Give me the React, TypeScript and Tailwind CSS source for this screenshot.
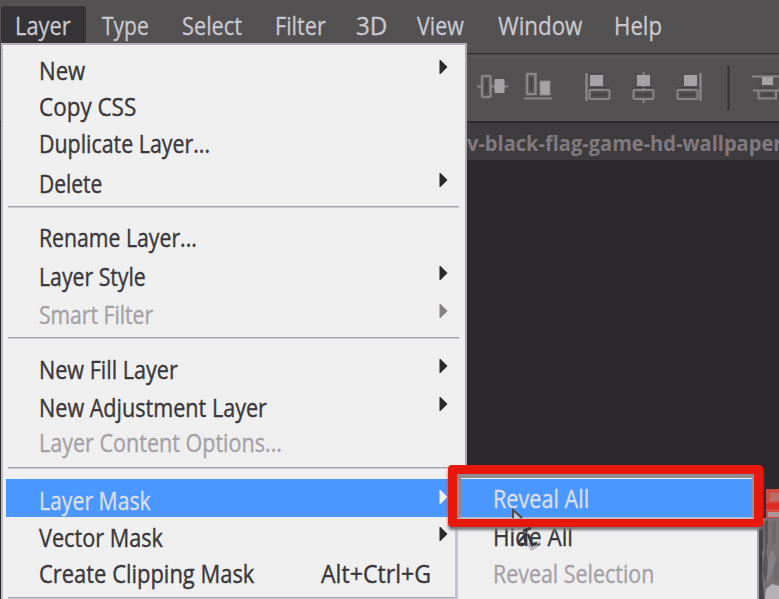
import { useLayoutEffect, useRef, useState } from 'react';

type FitProps = { text: string; width: number; className?: string };

// Condenses a label horizontally so that it fills the given width.
function Fit({ text, width, className = '' }: FitProps) {
  const ref = useRef<HTMLSpanElement>(null);
  const [scale, setScale] = useState(0.87);
  useLayoutEffect(() => {
    if (ref.current) setScale(width / ref.current.offsetWidth);
  }, [text, width]);
  return (
    <span className="block shrink-0" style={{ width }}>
      <span
        ref={ref}
        className={`inline-block origin-left whitespace-pre ${className}`}
        style={{ transform: `scaleX(${scale})` }}
      >
        {text}
      </span>
    </span>
  );
}

function Arrow({ className }: { className: string }) {
  return (
    <svg viewBox="0 0 9 14" className={`h-[14px] w-[9px] shrink-0 ${className}`} fill="currentColor">
      <path d="M0.5 0H1.5L8.5 7L1.5 14H0.5Z" />
    </svg>
  );
}

type RowProps = {
  text: string;
  width: number;
  height: string;
  arrow?: boolean;
  low?: boolean;
  tone?: 'normal' | 'muted' | 'active';
  shortcut?: string;
};

function Row({ text, width, height, arrow, low, tone = 'normal', shortcut }: RowProps) {
  const color = tone === 'muted' ? 'text-[#a5a1a7]' : tone === 'active' ? 'text-[#dcdfe8]' : 'text-[#3a383c]';
  const arrowColor = tone === 'muted' ? 'text-[#858084]' : tone === 'active' ? 'text-[#efefef]' : 'text-[#2b292c]';
  const padding = tone === 'active' ? 'bg-[#4a97ff] pt-[4px]' : low ? 'pt-[2px]' : 'pt-px';
  return (
    <div className={`flex items-center justify-between pr-[14px] pl-[32.5px] ${height} ${color} ${padding}`}>
      <Fit text={text} width={width} />
      {arrow && <Arrow className={`-mt-[7px] ${arrowColor}`} />}
      {shortcut && (
        <div className="pr-[17px]">
          <Fit text={shortcut} width={110} />
        </div>
      )}
    </div>
  );
}

function Separator({ className }: { className: string }) {
  return (
    <div className={`flex items-center pr-[3px] pl-[2px] ${className}`}>
      <div className="h-[2px] w-full border-b border-[#cbccd4] bg-[#a3a2ab]" />
    </div>
  );
}

function MenuBar() {
  return (
    <header className="flex h-[53px] bg-[#535152] pt-[6px] pl-px text-[25px] leading-[39px] text-[#c9c8cf] [-webkit-text-stroke:0.3px]">
      <div className="h-[37px] w-[85px] rounded-t-[3px] bg-[#363436] pl-[14px]">
        <Fit text="Layer" width={56} />
      </div>
      <nav className="flex">
        <div className="w-[96px] pl-[16px]"><Fit text="Type" width={47} /></div>
        <div className="w-[93px]"><Fit text="Select" width={60} /></div>
        <div className="w-[81px]"><Fit text="Filter" width={51} /></div>
        <div className="w-[61px]"><Fit text="3D" width={31} /></div>
        <div className="w-[81px]"><Fit text="View" width={47} /></div>
        <div className="w-[116px]"><Fit text="Window" width={84} /></div>
        <div><Fit text="Help" width={48} /></div>
      </nav>
    </header>
  );
}

function Toolbar() {
  return (
    <div className="h-[70px] border-t border-b-2 border-[#2b292c] bg-[#535152] pl-[470px]">
      <svg viewBox="470 54 309 67" className="h-[67px] w-[309px]" fill="none" stroke="#8b8487" strokeWidth="2">
        <path d="M470 57H779" stroke="#666365" strokeWidth="1" />
        {/* align vertical centers */}
        <path d="M477 86.5H481M491 86.5H508" />
        <rect x="482" y="76" width="8.5" height="21" rx="1" strokeWidth="2.5" />
        <rect x="494.5" y="79" width="10" height="14" rx="1" fill="#a5a1a4" stroke="none" />
        {/* align bottom edges */}
        <rect x="527" y="74" width="8.5" height="20" strokeWidth="2.5" />
        <rect x="540" y="81" width="10" height="14" fill="#a5a1a4" stroke="#8b8487" strokeWidth="1" />
        <path d="M524 98.5H552" />
        {/* align left edges */}
        <path d="M586.5 73V101" strokeWidth="2.5" />
        <rect x="590" y="75" width="13" height="11" fill="#a5a1a4" stroke="none" />
        <rect x="589.5" y="90" width="20" height="9" rx="1" />
        {/* align horizontal centers */}
        <path d="M643.5 72V76M643.5 85V89M643.5 99V103" />
        <rect x="637" y="75" width="13" height="11" fill="#a5a1a4" stroke="none" />
        <rect x="633.5" y="90" width="20" height="9" rx="1" />
        {/* align right edges */}
        <path d="M700.5 73V101" strokeWidth="2.5" />
        <rect x="684" y="75" width="13" height="11" fill="#a5a1a4" stroke="none" />
        <rect x="677.5" y="90" width="20" height="9" rx="1" />
        <path d="M728.5 66V110" stroke="#353336" />
        {/* distribute top edges */}
        <path d="M752 76.5H779M753 90.5H779" />
        <rect x="762" y="77" width="11" height="8" fill="#a5a1a4" stroke="none" />
        <path d="M758.5 91V98.5H776V91" />
        <path
          d="M590 73.5H603M633 73.5H638M761 73.5H779M590 87.5H609M634 87.5H653M677 87.5H697M758 88H776"
          stroke="#434143"
          strokeWidth="1"
        />
        <path d="M592 94.5H607M636 94.5H651M680 94.5H695M762 94.5H773M486.2 80V93M531.2 78V90" stroke="#454345" strokeWidth="2" />
      </svg>
    </div>
  );
}

// Sliver of the open photo at the right edge of the canvas.
function PhotoEdge() {
  return (
    <svg viewBox="0 0 21 110" className="h-[110px] w-[21px]">
      <rect x="4" y="29" width="17" height="81" fill="#777174" />
      <path d="M0 29H5V60L3 70L6 110H0Z" fill="#464346" />
      <path d="M6 34L10 30V52L8 63L11 78L7 92L4 80L7 62Z" fill="#5b575a" />
      <path d="M14 36L18 30V50L15 58Z" fill="#6a6669" />
      <path d="M10 68L15 60L18 70L14 85L9 93Z" fill="#868184" />
      <path d="M16 78L21 70V91H16Z" fill="#6e6a6d" />
      <path d="M8 100L14 95L21 97V110H7Z" fill="#b5b1b7" />
      <rect x="8" y="0" width="13" height="29" fill="#d14a43" />
      <path d="M12 4H21V12H12Z" fill="#b9706d" />
      <path d="M8 14H21V20H8Z" fill="#dd2b22" />
      <path d="M10 23H21V28H10Z" fill="#ae9295" />
    </svg>
  );
}

function LayerMenu() {
  return (
    <div className="absolute top-[43px] left-px h-[556px] w-[466px] overflow-hidden border-t-2 border-r-2 border-l-2 border-t-[#b6b1b8] border-r-[#aaa8af] border-l-[#bdbcc6] bg-[#efefef] pt-[6px] pr-[3px] pl-[3px] text-[25px] leading-none [-webkit-text-stroke:0.4px]">
      <Row text="New" width={46} height="h-[36px]" arrow low />
      <Row text="Copy CSS" width={97} height="h-[37px]" />
      <Row text="Duplicate Layer..." width={171} height="h-[38px]" />
      <Row text="Delete" width={63} height="h-[40px]" arrow low />
      <Separator className="mb-[5px] h-[9px]" />
      <Row text="Rename Layer..." width={158} height="h-[40px]" low />
      <Row text="Layer Style" width={107} height="h-[38px]" arrow low />
      <Row text="Smart Filter" width={114} height="h-[38px]" tone="muted" arrow low />
      <Separator className="mb-[6px] h-[11px]" />
      <Row text="New Fill Layer" width={139} height="h-[38px]" arrow low />
      <Row text="New Adjustment Layer" width={228} height="h-[38px]" arrow low />
      <Row text="Layer Content Options..." width={243} height="h-[34px]" tone="muted" />
      <Separator className="mb-[2px] h-[18px]" />
      <Row text="Layer Mask" width={112} height="h-[38px]" tone="active" arrow />
      <Row text="Vector Mask" width={124} height="h-[39px]" arrow low />
      <Row text="Create Clipping Mask" width={215} height="h-[34px]" shortcut="Alt+Ctrl+G" />
      <Separator className="h-[16px]" />
    </div>
  );
}

function MaskSubmenu() {
  return (
    <div className="absolute top-[474px] left-[455px] h-[125px] w-[304px] border-r-2 border-l-3 border-r-[#a5a2a9] border-l-[#c4c4ce] bg-[#efefef] pt-[5px] text-[25px] leading-none [-webkit-text-stroke:0.4px]">
      <div className="flex h-[38px] items-center bg-[#4a97ff] pl-[35px] text-[#dcdfe8]">
        <Fit text="Reveal All" width={96} />
      </div>
      <div className="flex h-[38px] items-center pl-[35px] text-[#3a383c]">
        <Fit text="Hide All" width={80} />
      </div>
      <div className="flex h-[36px] items-center pl-[35px] text-[#a5a1a7]">
        <Fit text="Reveal Selection" width={161} />
      </div>
    </div>
  );
}

// Red frame around the "Reveal All" entry.
function Highlight() {
  return (
    <div className="absolute top-[465px] left-[448px] h-[62px] w-[315px] rounded-[4px] border-[9px] border-b-[8px] border-[#e8190c] shadow-[0_3px_3px_#77737a]">
      <div className="h-full w-full border-t-4 border-r-2 border-b-2 border-l-4 border-t-[#8f8b91] border-r-[#96949e] border-b-[#b6bccb] border-l-[#8d8991]" />
    </div>
  );
}

function Cursor() {
  return (
    <svg viewBox="510 506 34 46" className="absolute top-[506px] left-[510px] h-[46px] w-[34px]">
      <path d="M526 543L540 541L537 548L531 551Z" fill="#aaa7af" opacity=".7" />
      <path d="M513 518V510L522 518" fill="#c9cbd3" stroke="#4c494d" strokeWidth="2" />
      <path d="M518 543L524 536L526 544H518M523 531L531 528M528 534L532 545L537 543" fill="none" stroke="#3a383c" strokeWidth="2.5" />
    </svg>
  );
}

export default function App() {
  return (
    <div className="relative h-[599px] w-[779px] overflow-hidden bg-[#2b292c] font-['Open_Sans','Noto_Sans',sans-serif]">
      <MenuBar />
      <Toolbar />
      <div className="flex h-[37px] items-center bg-[#3e3c3f] pt-[3px] pl-[467px] text-[21px] leading-none font-bold text-[#807a7e]">
        <Fit text="v-black-flag-game-hd-wallpaper" width={315} />
      </div>
      <main className="flex h-[439px] items-end justify-end">
        <PhotoEdge />
      </main>
      <LayerMenu />
      <MaskSubmenu />
      <Highlight />
      <Cursor />
    </div>
  );
}
